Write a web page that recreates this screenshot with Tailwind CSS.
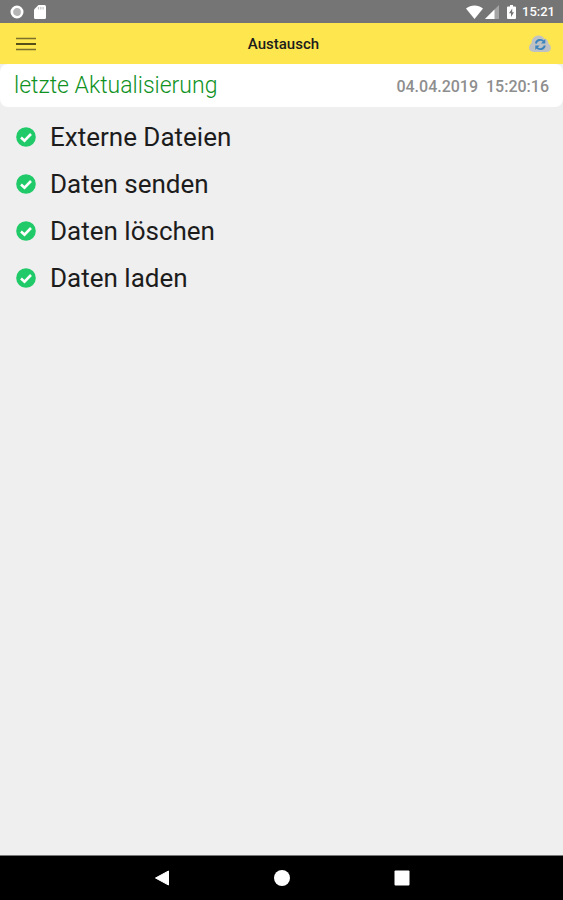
<!DOCTYPE html>
<html lang="de">
<head>
  <meta charset="UTF-8" />
  <meta name="viewport" content="width=device-width, initial-scale=1.0"/>
  <title>Austausch</title>
  <script src="https://cdn.jsdelivr.net/npm/@tailwindcss/browser@4"></script>
</head>
<body class="flex min-h-screen flex-col bg-[#efefef] font-[Roboto,sans-serif] text-[#1c1c1c]">

  <!-- Status bar -->
  <div class="flex h-[23px] items-center justify-between bg-[#757575] pr-2 pl-[10px] text-white">
    <div class="flex items-center gap-[10px]">
      <svg class="size-[14px]" viewBox="0 0 14 14">
        <circle cx="7" cy="7" r="5.2" fill="#b5b5b5" stroke="#fff" stroke-width="2.6"/>
      </svg>
      <svg class="h-[14px] w-3" viewBox="0 0 12 14">
        <path d="M4.500 0H10.500Q12 0 12 1.500V12.500Q12 14 10.500 14H1.500Q0 14 0 12.500V4.500Z" fill="#fff"/>
        <path d="M4.500 2v2.500M6.800 2v2.500M9.100 2v2.500" stroke="#c4c4c4" stroke-width="1.200"/>
      </svg>
    </div>
    <div class="flex items-center">
      <svg class="h-[14px] w-[17px]" viewBox="0 0 17 14">
        <path d="M0 3.500C5 -.4 12 -.4 17 3.500L8.500 14Z" fill="#fff"/>
      </svg>
      <svg class="ml-[2px] size-[14px]" viewBox="0 0 14 14">
        <path d="M14 0V14H0Z" fill="#a5a5a5"/>
        <path d="M9.500 4.500V14H0Z" fill="#fff"/>
      </svg>
      <svg class="ml-2 h-[14px] w-[9px]" viewBox="0 0 9 14">
        <path d="M3 0H6V1.400H8Q9 1.400 9 2.400V13Q9 14 8 14H1Q0 14 0 13V2.400Q0 1.400 1 1.400H3Z" fill="#fff"/>
        <path d="M5.200 3.500L2 8.300H4V12L7 7.200H5.200Z" fill="#757575"/>
      </svg>
      <span class="ml-[6px] text-[13px] font-medium">15:21</span>
    </div>
  </div>

  <!-- App bar -->
  <header class="grid h-[41px] grid-cols-3 items-center bg-[#fee64f] pt-px pr-3 pl-4">
    <button type="button" class="justify-self-start" aria-label="Menü">
      <svg class="h-[14px] w-5" viewBox="0 0 20 14">
        <path d="M0 1.500H20M0 12.500H20" stroke="#7d7129" stroke-width="1.700"/>
        <path d="M0 7H20" stroke="#39340f" stroke-width="1.700"/>
      </svg>
    </button>
    <h1 class="justify-self-center text-[15px] font-medium">Austausch</h1>
    <button type="button" class="justify-self-end" aria-label="Daten austauschen">
      <svg class="h-[18px] w-[22px]" viewBox="0 0 22 18">
        <path d="M5 17Q0 16.500 0 12.500Q0 9.500 2.500 8Q3 1 9 .5Q13 0 15 3.500Q19 4 19.500 8.500Q22 10 22 13Q21.500 17 17.500 17Z" fill="#bfc2c4"/>
        <path d="M6.800 8.500A4.600 4.600 0 0 1 14.800 6.500M15.800 10.500A4.600 4.600 0 0 1 7.800 12.500" fill="none" stroke="#3c84bd" stroke-width="1.900"/>
        <path d="M16.300 4V8.600H12ZM6.300 15V10.400H10.600Z" fill="#3c84bd"/>
      </svg>
    </button>
  </header>

  <main class="flex-1">
    <!-- Last update -->
    <section class="flex h-[43px] items-center justify-between rounded-lg bg-white px-[14px] pt-[2px]">
      <h2 class="text-[23px] font-[350] text-[#0f921f]">letzte Aktualisierung</h2>
      <time datetime="2019-04-04T15:20:16" class="text-base font-medium whitespace-pre text-[#8e8e8e]">04.04.2019  15:20:16</time>
    </section>

    <!-- Exchange steps -->
    <ul class="flex flex-col pt-[6px] pl-4 text-[26px]">
      <li class="flex h-[47px] items-center gap-[14px]">
        <svg class="size-5" viewBox="0 0 20 20"><circle cx="10" cy="10" r="9.800" fill="#20ca68"/><path d="M5 10.500L8.500 13.700L15 7" fill="none" stroke="#fff" stroke-width="2.600"/></svg>
        <span class="pt-px">Externe Dateien</span>
      </li>
      <li class="flex h-[47px] items-center gap-[14px]">
        <svg class="size-5" viewBox="0 0 20 20"><circle cx="10" cy="10" r="9.800" fill="#20ca68"/><path d="M5 10.500L8.500 13.700L15 7" fill="none" stroke="#fff" stroke-width="2.600"/></svg>
        <span class="pt-px">Daten senden</span>
      </li>
      <li class="flex h-[47px] items-center gap-[14px]">
        <svg class="size-5" viewBox="0 0 20 20"><circle cx="10" cy="10" r="9.800" fill="#20ca68"/><path d="M5 10.500L8.500 13.700L15 7" fill="none" stroke="#fff" stroke-width="2.600"/></svg>
        <span class="pt-px">Daten löschen</span>
      </li>
      <li class="flex h-[47px] items-center gap-[14px]">
        <svg class="size-5" viewBox="0 0 20 20"><circle cx="10" cy="10" r="9.800" fill="#20ca68"/><path d="M5 10.500L8.500 13.700L15 7" fill="none" stroke="#fff" stroke-width="2.600"/></svg>
        <span class="pt-px">Daten laden</span>
      </li>
    </ul>
  </main>

  <!-- Navigation bar -->
  <nav class="flex h-[45px] items-center justify-center gap-[104px] border-t border-[#777] bg-black">
    <button type="button" aria-label="Zurück">
      <svg class="size-4" viewBox="0 0 16 16"><path d="M14.500 1V15L1.500 8Z" fill="#fff" stroke="#fff" stroke-linejoin="round"/></svg>
    </button>
    <button type="button" aria-label="Startseite">
      <svg class="size-4" viewBox="0 0 16 16"><circle cx="8" cy="8" r="8" fill="#fff"/></svg>
    </button>
    <button type="button" aria-label="Übersicht">
      <svg class="size-4" viewBox="0 0 16 16"><rect x=".5" y=".5" width="15" height="15" rx="1" fill="#fff"/></svg>
    </button>
  </nav>

</body>
</html>
